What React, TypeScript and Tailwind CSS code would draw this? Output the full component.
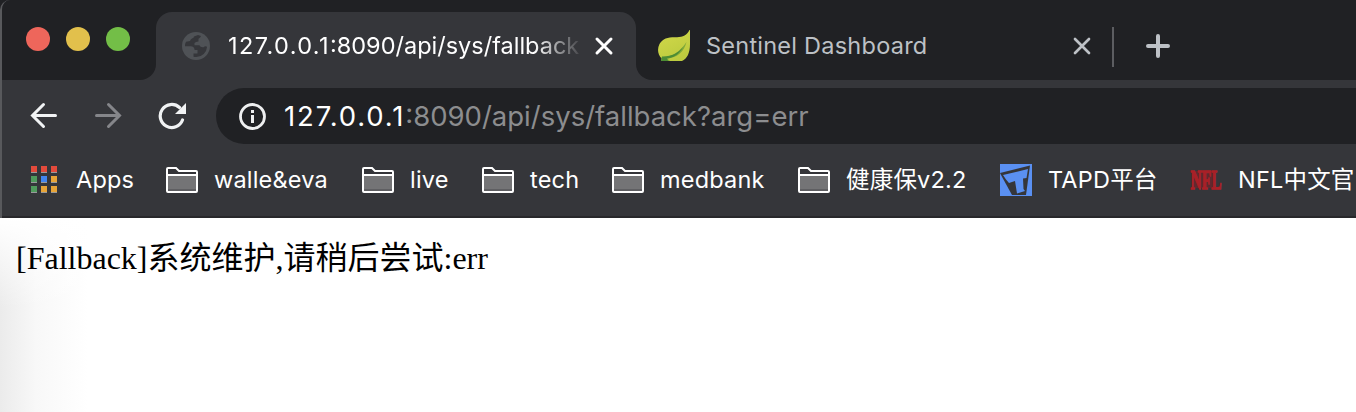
import type { ReactNode } from "react";

const chrome = "[font-family:Inter,'Noto_Sans_CJK_SC',sans-serif]";

function Globe() {
  return (
    <svg width="28" height="28" viewBox="0 0 28 28" className="shrink-0">
      <circle cx="14" cy="14" r="14" fill="#4f5256" />
      <path
        d="M16 3L12 4.500Q12 6 10 6.500Q8.500 7 8 9L4 9.700Q2.800 12 2.900 14.200L8.500 14.200Q12.500 14.500 12.600 18H15.500V21.500H11.500V24.700Q17.500 26 21.700 21.900Q24.800 18.700 25.100 14.700Q23 13.600 21.600 15.200Q18.600 15.900 17.400 13.200H12.500V10.900Q13.800 9.300 16.500 9.400V6.800Q18.500 5.700 19 4Z"
        fill="#35363a"
      />
    </svg>
  );
}

function Leaf() {
  return (
    <svg width="32" height="32" viewBox="0 0 32 32" className="shrink-0">
      <defs>
        <linearGradient id="leaf" x1="0" y1="0" x2="0.5" y2="1">
          <stop offset="0" stopColor="#d3d94a" />
          <stop offset="1" stopColor="#bccb3f" />
        </linearGradient>
      </defs>
      <path d="M31.500 0C29 5 25 7 19 7.300C11 7 5 8 1.500 14C-1 19-.3 25 3.700 28.500L3 31H24C29 29 32 23 32 14V0Z" fill="url(#leaf)" />
      <path d="M3 31L4 27C14 27 22 22 28.500 12C26 22 19 28 9 28.500L12 31Z" fill="#7fa93a" />
      <path d="M3 31L4 26.500C13 27 20 23 25 17C21 25 15 28 9 28.500L10 31Z" fill="#4c8c35" />
    </svg>
  );
}

function Cross({ color, width }: { color: string; width: number }) {
  return (
    <svg width="20" height="20" viewBox="0 0 20 20" className="shrink-0">
      <path d="M3 3L17 17M17 3L3 17" stroke={color} strokeWidth={width} strokeLinecap="round" />
    </svg>
  );
}

function Folder() {
  return (
    <svg width="32" height="26" viewBox="0 0 32 26" className="shrink-0">
      <path d="M1 24V2Q1 1 2 1H10L13 4H30Q31 4 31 5V24Q31 25 30 25H2Q1 25 1 24Z" fill="#343438" />
      <rect x="2" y="9" width="28" height="15" fill="#747476" />
      <rect x="2" y="22" width="28" height="2" fill="#5f5f62" />
      <path d="M1 8H31M1 24V2Q1 1 2 1H10L13 4H30Q31 4 31 5V24Q31 25 30 25H2Q1 25 1 24Z" fill="none" stroke="#fff" strokeWidth="2" />
    </svg>
  );
}

const appColors = ["#e34b3c", "#e34b3c", "#e34b3c", "#509b5d", "#4285ee", "#e7a438", "#509b5d", "#e7a438", "#e7a438"];

function AppsGrid() {
  return (
    <svg width="26" height="28" viewBox="0 0 26 28" className="shrink-0">
      {appColors.map((c, i) => (
        <g key={i} transform={`translate(${(i % 3) * 10} ${Math.floor(i / 3) * 10})`}>
          <rect y="1" width="6" height="6" fill="#98999b" />
          <rect width="6" height="6" fill={c} />
        </g>
      ))}
    </svg>
  );
}

function TapdLogo() {
  return (
    <svg width="32" height="32" viewBox="0 0 32 32" className="shrink-0">
      <rect width="32" height="32" fill="#5a90f2" />
      <path d="M0 9L30 1.500L26 31H12L1 11Z" fill="#35363a" />
      <path d="M3 11L28 5L26.500 14L23 14.500L23.500 25L25 27L17 29.500L15 17L9 19L6 15.500Z" fill="#5a90f2" />
    </svg>
  );
}

function NflLogo() {
  return (
    <svg width="32" height="32" viewBox="0 0 32 32" className="shrink-0">
      <rect x="2" y="7" width="20" height="17" fill="#60292f" />
      <g transform="translate(0.500 25) scale(0.570 1)">
        <text fill="#a92027" stroke="#a92027" strokeWidth="1.400" fontFamily="Liberation Serif" fontWeight="700" fontSize="27">
          NFL
        </text>
      </g>
    </svg>
  );
}

function Bookmark({ icon, slot, gap, children }: { icon: ReactNode; slot: string; gap: string; children: ReactNode }) {
  return (
    <div className={`flex h-full shrink-0 items-center ${slot} ${gap}`}>
      {icon}
      <span className="whitespace-nowrap">{children}</span>
    </div>
  );
}

export default function App() {
  return (
    <div className={`flex h-[412px] w-[1356px] flex-col overflow-hidden bg-white ${chrome}`}>
      <div className="h-[218px] shrink-0 bg-[#202124]">
        <div className="flex h-[218px] flex-col overflow-hidden rounded-tl-[10px] border-l-2 border-[#58595c] bg-[#35363a]">
          <header className="flex h-20 shrink-0 bg-[#35363a]">
            <div className="flex w-[154px] shrink-0 items-start gap-4 rounded-br-[16px] bg-[#202124] pl-6 pt-[27px]">
              <i className="size-6 rounded-full bg-[#ee665b]" />
              <i className="size-6 rounded-full bg-[#e2c04c]" />
              <i className="size-6 rounded-full bg-[#73be47]" />
            </div>
            <div className="w-[480px] shrink-0 bg-[#202124] pt-3">
              <div className="flex h-[68px] items-center rounded-t-[16px] bg-[#35363a] pl-[26px]">
                <Globe />
                <span className="ml-[18px] w-[354px] whitespace-nowrap text-[23.5px] leading-8 tracking-[0px] text-white [mask-image:linear-gradient(to_right,#000_306px,transparent_356px)]">
                  <span className="tracking-[1.4px]">127.0.0.1</span>:8090/api/sys/fallback
                </span>
                <span className="ml-[12px] flex">
                  <Cross color="#ffffff" width={3} />
                </span>
              </div>
            </div>
            <div className="flex min-w-0 flex-1 items-center rounded-bl-[16px] bg-[#202124] pl-[22px] pt-3">
              <Leaf />
              <span className="ml-4 w-[366px] whitespace-nowrap text-[23.5px] leading-8 tracking-[0.24px] text-[#bdc1c6]">Sentinel Dashboard</span>
              <Cross color="#bdc1c6" width={2.7} />
              <i className="ml-5 mt-[2px] h-10 w-[2px] bg-[#5c5d61]" />
              <svg width="24" height="24" viewBox="0 0 24 24" className="ml-8">
                <path d="M12 2V22M2 12H22" stroke="#bdc1c6" strokeWidth="4" strokeLinecap="round" />
              </svg>
            </div>
          </header>
          <div className="flex h-[72px] shrink-0 items-center">
            <svg width="28" height="28" viewBox="0 0 28 28" className="ml-7" fill="none" stroke="#f1f3f4" strokeWidth="3" strokeLinecap="round">
              <path d="M25.500 13.500H3M13.500 2.500L2.500 13.500L13.500 24.500" />
            </svg>
            <svg width="28" height="28" viewBox="0 0 28 28" className="ml-9" fill="none" stroke="#85868a" strokeWidth="3" strokeLinecap="round">
              <path d="M2.500 13.500H25M14.500 2.500L25.500 13.500L14.500 24.500" />
            </svg>
            <svg width="28" height="28" viewBox="0 0 28 28" className="ml-9" fill="none">
              <path d="M21.500 5.500A11.500 11.500 0 1 0 24.500 18" stroke="#f1f3f4" strokeWidth="3.200" strokeLinecap="round" />
              <path d="M28 1V12H17Z" fill="#f1f3f4" />
            </svg>
            <div className="ml-[30px] flex h-14 flex-1 items-center rounded-l-full bg-[#202124] pl-[22px]">
              <svg width="28" height="28" viewBox="0 0 28 28" className="shrink-0">
                <circle cx="14.500" cy="14.500" r="12" fill="none" stroke="#eeeff0" strokeWidth="2.800" />
                <path d="M13 8H16V11H13ZM13 13H16V21H13Z" fill="#eeeff0" />
              </svg>
              <span className="ml-[18px] whitespace-nowrap text-[27.5px] leading-9 text-[#8c8d8f]">
                <span className="tracking-[1.85px] text-white">127.0.0.1</span>:8090/api/sys/fallback?arg=err
              </span>
            </div>
          </div>
          <nav className="flex h-16 shrink-0 items-center pb-2 pl-7 text-[23.5px] leading-8 tracking-[0.2px] text-white">
            <Bookmark icon={<span className="pl-px"><AppsGrid /></span>} slot="w-[136px]" gap="gap-[19px]">Apps</Bookmark>
            <Bookmark icon={<Folder />} slot="w-[196px]" gap="gap-4">walle&amp;eva</Bookmark>
            <Bookmark icon={<Folder />} slot="w-[120px]" gap="gap-4">live</Bookmark>
            <Bookmark icon={<Folder />} slot="w-[130px]" gap="gap-4">tech</Bookmark>
            <Bookmark icon={<Folder />} slot="w-[186px]" gap="gap-4">medbank</Bookmark>
            <Bookmark icon={<Folder />} slot="w-[202px]" gap="gap-4">健康保v2.2</Bookmark>
            <Bookmark icon={<TapdLogo />} slot="w-[190px]" gap="gap-4">TAPD平台</Bookmark>
            <Bookmark icon={<NflLogo />} slot="w-[166px]" gap="gap-4">NFL中文官</Bookmark>
          </nav>
          <i className="h-[2px] shrink-0 bg-[#28282b]" />
        </div>
      </div>
      <main className="flex-1 bg-[linear-gradient(to_bottom,#ffffff,#ffffff00_90px),linear-gradient(to_right,#ebebeb,#f8f8f8_36px,#ffffff_88px)] pl-4 pt-[22px]">
        <p className="whitespace-nowrap text-[32px] leading-9 text-black [font-family:'Liberation_Serif','Noto_Sans_CJK_SC',serif]">[Fallback]系统维护,请稍后尝试:err</p>
      </main>
    </div>
  );
}
